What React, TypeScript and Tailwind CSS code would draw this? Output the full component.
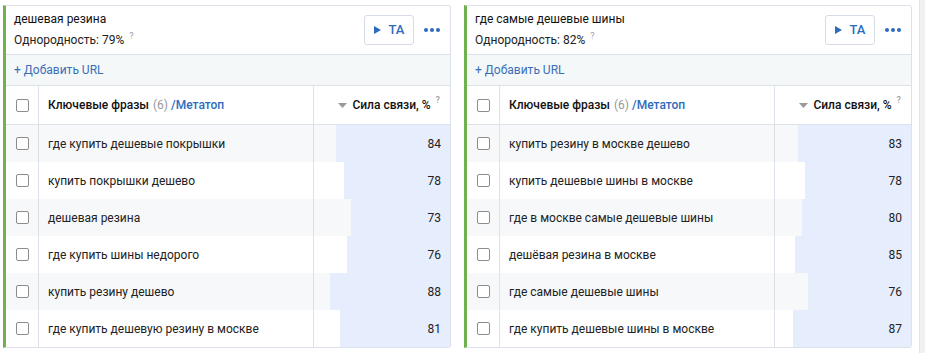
import React from 'react';

type Row = { phrase: string; value: number };

type Cluster = {
  id: number;
  title: string;
  homogeneity: number;
  rows: Row[];
};

const clusters: Cluster[] = [
  {
    id: 1,
    title: 'дешевая резина',
    homogeneity: 79,
    rows: [
      { phrase: 'где купить дешевые покрышки', value: 84 },
      { phrase: 'купить покрышки дешево', value: 78 },
      { phrase: 'дешевая резина', value: 73 },
      { phrase: 'где купить шины недорого', value: 76 },
      { phrase: 'купить резину дешево', value: 88 },
      { phrase: 'где купить дешевую резину в москве', value: 81 },
    ],
  },
  {
    id: 2,
    title: 'где самые дешевые шины',
    homogeneity: 82,
    rows: [
      { phrase: 'купить резину в москве дешево', value: 83 },
      { phrase: 'купить дешевые шины в москве', value: 78 },
      { phrase: 'где в москве самые дешевые шины', value: 80 },
      { phrase: 'дешёвая резина в москве', value: 85 },
      { phrase: 'где самые дешевые шины', value: 76 },
      { phrase: 'где купить дешевые шины в москве', value: 87 },
    ],
  },
];

const Checkbox = () => (
  <span className="block w-[13px] h-[13px] rounded-[2px] border border-[#8c8c8c] bg-white" />
);

const Hint = () => <sup className="text-[9px] text-[#9aa0a6] ml-[5px] -top-[5px]">?</sup>;

const ClusterCard = ({ cluster }: { cluster: Cluster }) => (
  <div className="w-[448px] h-[343px] flex flex-col border border-[#dde2ea] border-l-[3px] border-l-[#6fb04f] rounded-r-[3px] bg-white overflow-hidden">
    {/* Header */}
    <div className="h-[49px] shrink-0 flex items-start justify-between pl-[8px] pr-[8px] border-b border-[#dde2ea]">
      <div className="pt-[5px]">
        <div className="text-[12px] leading-[17px] text-[#111]">{cluster.title}</div>
        <div className="text-[12px] leading-[16px] mt-[4px] text-[#222]">
          Однородность: {cluster.homogeneity}%
          <Hint />
        </div>
      </div>
      <div className="flex items-center gap-[10px] pt-[9px]">
        <button className="w-[50px] h-[30px] flex items-center justify-center gap-[8px] border border-[#d6dce6] rounded-[3px] bg-white text-[#2d6bbd] text-[13px] font-medium">
          <svg width="7" height="8" viewBox="0 0 7 8">
            <path d="M0 0 L7 4 L0 8 Z" fill="#2d6bbd" />
          </svg>
          TA
        </button>
        <div className="flex gap-[2px] pr-[2px]">
          <span className="w-[4px] h-[4px] rounded-full bg-[#2d6bbd]" />
          <span className="w-[4px] h-[4px] rounded-full bg-[#2d6bbd]" />
          <span className="w-[4px] h-[4px] rounded-full bg-[#2d6bbd]" />
        </div>
      </div>
    </div>

    {/* Add URL */}
    <div className="h-[31px] shrink-0 flex items-center pl-[8px] bg-[#f4f8f8] border-b border-[#dde2ea] text-[12px] text-[#3a6fb8]">
      + Добавить URL
    </div>

    {/* Table header */}
    <div className="h-[39px] shrink-0 flex border-b border-[#dde2ea] text-[12px]">
      <div className="w-[33px] flex items-center justify-center border-r border-[#dde2ea]">
        <Checkbox />
      </div>
      <div className="w-[274px] flex items-center pl-[9px] font-medium text-[#111]">
        Ключевые фразы
        <span className="text-[#999] font-normal ml-[4px]">(6)</span>
        <span className="text-[#2d6bbd] ml-[3px]">/Метатоп</span>
      </div>
      <div className="flex-1 flex items-center justify-end pr-[10px] border-l border-[#dde2ea] font-medium text-[#111]">
        <svg width="9" height="5" viewBox="0 0 9 5" className="mr-[5px]">
          <path d="M0 0 L9 0 L4.5 5 Z" fill="#9a9a9a" />
        </svg>
        Сила связи, %
        <Hint />
      </div>
    </div>

    {/* Rows */}
    <div className="flex-1 flex flex-col">
      {cluster.rows.map((row, index) => (
        <div
          key={row.phrase}
          className={`h-[37px] flex text-[12px] ${index % 2 === 0 ? 'bg-[#f6f8fa]' : 'bg-white'}`}
        >
          <div className="w-[33px] flex items-center justify-center border-r border-[#dde2ea]">
            <Checkbox />
          </div>
          <div className="w-[274px] flex items-center pl-[9px] text-[#222]">{row.phrase}</div>
          <div className="relative flex-1 flex items-center justify-end pr-[9px] border-l border-[#dde2ea] text-[#222]">
            <div
              className="absolute right-0 top-0 bottom-0 bg-[#e6edfc]"
              style={{ width: `${row.value}%` }}
            />
            <span className="relative">{row.value}</span>
          </div>
        </div>
      ))}
    </div>
  </div>
);

export default function App() {
  return (
    <div
      className="w-[925px] h-[353px] bg-white flex overflow-hidden"
      style={{ fontFamily: 'Roboto, "Noto Sans", sans-serif' }}
    >
      <div className="flex gap-[13px] pl-[3px] pt-[5px]">
        {clusters.map((c) => (
          <ClusterCard key={c.id} cluster={c} />
        ))}
      </div>
      <div className="ml-auto w-[6px] h-full bg-[#f1f1f1] border-l border-[#e4e4e4]" />
    </div>
  );
}
